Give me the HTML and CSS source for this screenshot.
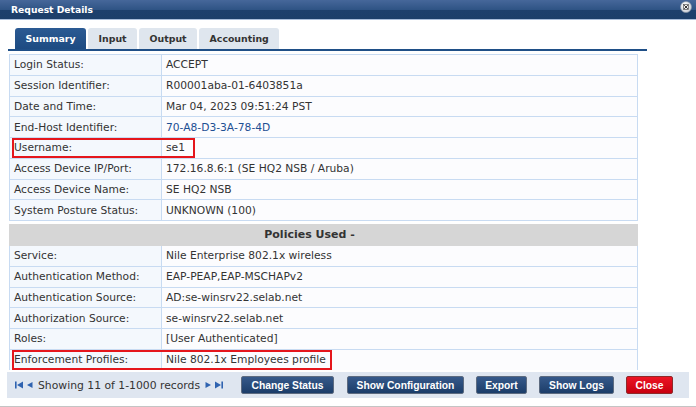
FILE: index.html
```html
<!DOCTYPE html>
<html lang="en">
<head>
<meta charset="UTF-8">
<title>Request Details</title>
<link rel="stylesheet" href="styles.css">
</head>
<body>
<div class="dialog">
  <div class="titlebar">
    <span class="title">Request Details</span>
    <svg class="close-icon" width="12" height="12" viewBox="0 0 12 12">
      <defs>
        <radialGradient id="cg" cx="40%" cy="35%" r="70%">
          <stop offset="0" stop-color="#ffffff"/>
          <stop offset="1" stop-color="#c9ced6"/>
        </radialGradient>
      </defs>
      <circle cx="6" cy="6" r="5.5" fill="url(#cg)" stroke="#8a97a8" stroke-width="0.6"/>
      <rect x="3.6" y="3.6" width="4.8" height="4.8" fill="none" stroke="#555" stroke-width="0.7"/>
      <path d="M4.2 4.2 L7.8 7.8 M7.8 4.2 L4.2 7.8" stroke="#333" stroke-width="1"/>
    </svg>
  </div>

  <div class="tabs">
    <div class="tab active">Summary</div>
    <div class="tab">Input</div>
    <div class="tab">Output</div>
    <div class="tab">Accounting</div>
  </div>

  <div class="content">
    <table class="details">
      <tr><td class="label">Login Status:</td><td>ACCEPT</td></tr>
      <tr><td class="label">Session Identifier:</td><td>R00001aba-01-6403851a</td></tr>
      <tr><td class="label">Date and Time:</td><td>Mar 04, 2023 09:51:24 PST</td></tr>
      <tr><td class="label">End-Host Identifier:</td><td><a class="link">70-A8-D3-3A-78-4D</a></td></tr>
      <tr><td class="label"><span class="mark mark-user"></span>Username:</td><td>se1</td></tr>
      <tr><td class="label">Access Device IP/Port:</td><td>172.16.8.6:1 (SE HQ2 NSB / Aruba)</td></tr>
      <tr><td class="label">Access Device Name:</td><td>SE HQ2 NSB</td></tr>
      <tr><td class="label">System Posture Status:</td><td>UNKNOWN (100)</td></tr>
    </table>

    <div class="section-head">Policies Used -</div>

    <table class="details details-policies">
      <tr><td class="label">Service:</td><td>Nile Enterprise 802.1x wireless</td></tr>
      <tr><td class="label">Authentication Method:</td><td>EAP-PEAP,EAP-MSCHAPv2</td></tr>
      <tr><td class="label">Authentication Source:</td><td>AD:se-winsrv22.selab.net</td></tr>
      <tr><td class="label">Authorization Source:</td><td>se-winsrv22.selab.net</td></tr>
      <tr><td class="label">Roles:</td><td>[User Authenticated]</td></tr>
      <tr><td class="label"><span class="mark mark-profile"></span>Enforcement Profiles:</td><td>Nile 802.1x Employees profile</td></tr>
      <tr><td class="label">&nbsp;</td><td>&nbsp;</td></tr>
    </table>
  </div>

  <div class="footer">
    <div class="pager">
      <svg width="9" height="8" viewBox="0 0 9 8"><rect x="0" y="0.5" width="1.6" height="7" fill="#2f63b0"/><path d="M8 0.5 L2 4 L8 7.5 Z" fill="#2f63b0"/></svg>
      <svg width="7" height="8" viewBox="0 0 7 8"><path d="M6.5 1 L1 4 L6.5 7 Z" fill="#2f63b0"/></svg>
      <span class="pager-text">Showing 11 of 1-1000 records</span>
      <svg width="7" height="8" viewBox="0 0 7 8"><path d="M0.5 1 L6 4 L0.5 7 Z" fill="#2f63b0"/></svg>
      <svg width="9" height="8" viewBox="0 0 9 8"><path d="M1 0.5 L7 4 L1 7.5 Z" fill="#2f63b0"/><rect x="7.4" y="0.5" width="1.6" height="7" fill="#2f63b0"/></svg>
    </div>
    <div class="actions">
      <button class="btn btn-status">Change Status</button>
      <button class="btn btn-config">Show Configuration</button>
      <button class="btn btn-export">Export</button>
      <button class="btn btn-logs">Show Logs</button>
      <button class="btn btn-close">Close</button>
    </div>
  </div>
</div>
</body>
</html>
```

FILE: styles.css
```css
body {
  margin: 0;
  background: #fff;
  font-family: "DejaVu Sans", Verdana, sans-serif;
  color: #333;
}
.dialog {
  width: 696px;
  height: 407px;
  position: relative;
  border-bottom: 1px solid #c4c4c4;
  box-sizing: border-box;
}
.titlebar {
  height: 19px;
  border-bottom: 1px solid #a9bedb;
  background: linear-gradient(#46679a 0%, #2f5485 50%, #1d406d 51%, #1c3f6a 100%);
  display: flex;
  align-items: center;
  justify-content: space-between;
  padding: 0 4px 0 11px;
}
.title {
  color: #fff;
  font-weight: bold;
  font-size: 9.2px;
}
.close-icon {
  margin-top: -5px;
}
.tabs {
  display: flex;
  gap: 2px;
  margin: 8px 0 0 8px;
  width: 639px;
  padding-left: 7px;
  box-sizing: border-box;
  border-bottom: 2px solid #1f4f87;
}
.tab {
  height: 21px;
  line-height: 21px;
  padding: 0 10.5px;
  font-size: 9.4px;
  font-weight: bold;
  color: #333;
  background: #dfe6ee;
  border-radius: 3px 3px 0 0;
}
.tab.active {
  background: linear-gradient(#2b5a93, #1d4b82);
  color: #fff;
}
.content {
  margin: 3px 0 0 9px;
  width: 629px;
  height: 316px;
  overflow: hidden;
}
.details {
  width: 100%;
  border-collapse: collapse;
  font-size: 10.7px;
}
.details td {
  height: 19.75px;
  padding: 0 0 0 4px;
  border: 1px solid #c8dbf2;
  background: #fcfcfe;
  color: #333;
  white-space: nowrap;
}
.details td.label {
  width: 147px;
  background: #f4f8fd;
  position: relative;
}
.details-policies tr:first-child td {
  border-top: none;
}
.link {
  color: #1d4f93;
}
.section-head {
  margin-top: 3px;
  height: 22px;
  line-height: 22px;
  background: #d6d6d6;
  text-align: center;
  font-size: 11px;
  font-weight: bold;
  color: #333;
  padding-right: 28px;
}
.mark {
  position: absolute;
  left: 2px;
  top: 0;
  height: 20px;
  border: 2px solid #e5161c;
  box-sizing: border-box;
}
.mark-user {
  width: 183px;
}
.mark-profile {
  width: 320px;
}
.footer {
  margin: 2px 7px 0 7px;
  height: 26px;
  background: #dfe6f0;
  display: flex;
  align-items: center;
  padding: 0 16px 0 8px;
}
.pager {
  display: flex;
  align-items: center;
  gap: 2px;
  font-size: 10.8px;
  color: #333;
}
.pager-text {
  margin: 0 3px 0 3px;
}
.actions {
  margin-left: auto;
  display: flex;
  gap: 12px;
}
.btn {
  height: 18px;
  padding: 0;
  border: 1px solid #5d6b80;
  border-radius: 2px;
  background: linear-gradient(#36598a, #1c3d69);
  color: #fff;
  font-family: "Liberation Sans", Arial, sans-serif;
  font-weight: bold;
  font-size: 10.3px;
}
.btn-status { width: 93px; }
.btn-config { width: 117px; margin-left: 1px; }
.btn-export { width: 51px; }
.btn-logs { width: 75px; }
.btn-close {
  width: 47px;
  background: linear-gradient(#ec1424, #c8000f);
  border-color: #8e2a2a;
}
```
